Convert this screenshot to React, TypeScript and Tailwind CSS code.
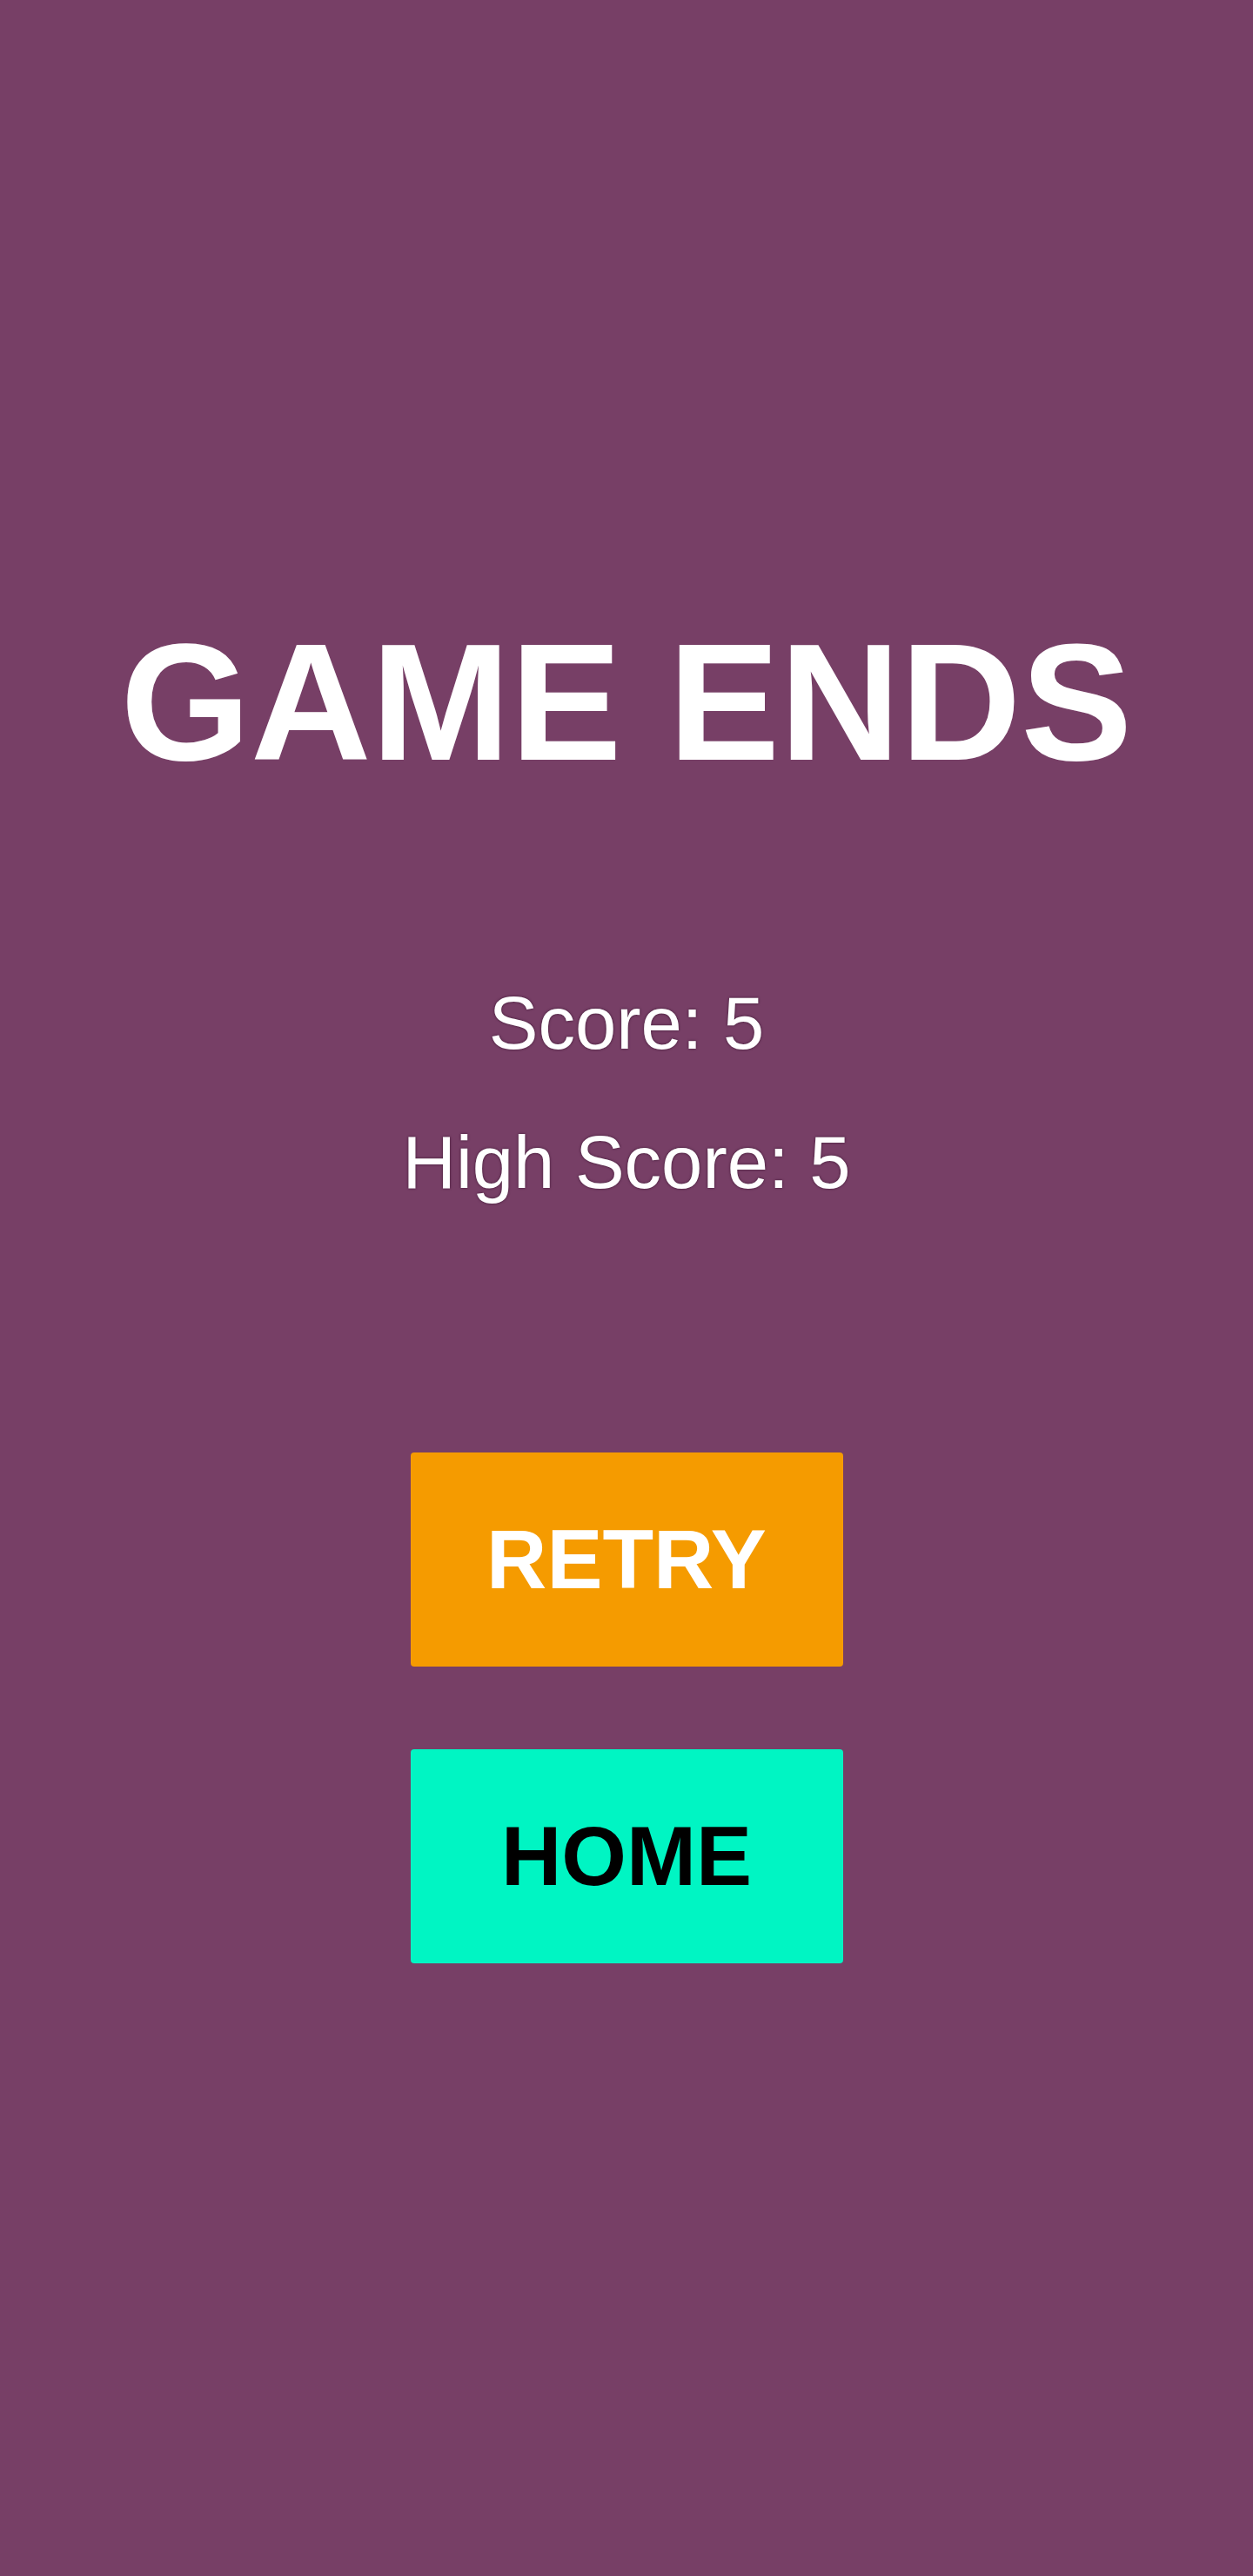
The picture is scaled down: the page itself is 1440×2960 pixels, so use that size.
const font = { fontFamily: '"Liberation Sans", Arial, sans-serif' };

function ScoreLine({ label, value }: { label: string; value: number }) {
  return (
    <p className="text-[85px] leading-none text-white [text-shadow:0_0_3px_#3a1530]">
      {label}: {value}
    </p>
  );
}

export default function App() {
  const score = 5;
  const highScore = 5;

  return (
    <div
      className="flex h-[2960px] w-full flex-col items-center bg-[#773f66] pt-[711px]"
      style={font}
    >
      <h1 className="text-[192px] font-bold leading-none text-white">GAME ENDS</h1>

      <div className="mt-[230px] flex flex-col items-center gap-[75px]">
        <ScoreLine label="Score" value={score} />
        <ScoreLine label="High Score" value={highScore} />
      </div>

      <div className="mt-[291px] flex flex-col items-center gap-[95px]">
        <button className="flex h-[246px] w-[497px] items-center justify-center rounded bg-[#f59b00] text-[96px] font-bold text-white">
          RETRY
        </button>
        <button className="flex h-[246px] w-[497px] items-center justify-center rounded bg-[#00f5c3] text-[96px] font-bold text-black">
          HOME
        </button>
      </div>
    </div>
  );
}
